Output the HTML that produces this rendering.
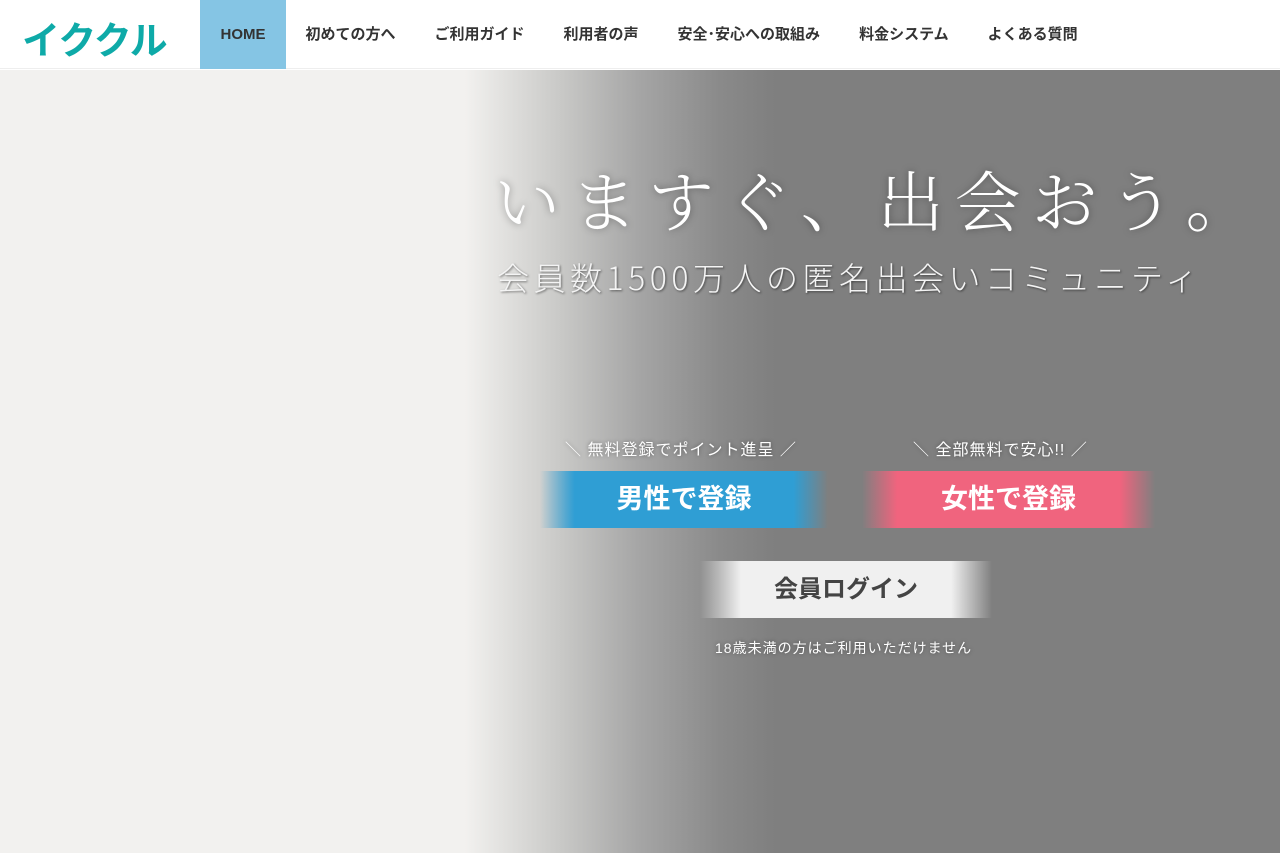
<!DOCTYPE html>
<html><head><meta charset="utf-8"><style>
*{margin:0;padding:0;box-sizing:border-box}
body{width:1280px;height:853px;overflow:hidden;font-family:"Liberation Sans","Noto Sans CJK JP",sans-serif;background:#fff}
.hdr{height:69px;background:#fff;position:relative;border-bottom:1px solid #eee}
.logo{position:absolute;left:22px;top:10px;font-size:38px;font-weight:bold;color:#0eaaa8;letter-spacing:-1px}
.nav{position:absolute;left:200px;top:0;display:flex;height:69px}
.nav a{display:block;height:69px;line-height:69px;padding:0 19.5px;font-size:15px;font-weight:bold;color:#333;text-decoration:none}
.nav a.on{background:#85c5e4;width:86px;text-align:center;padding:0}
.hero{position:absolute;top:70px;left:0;width:1280px;height:783px;background:linear-gradient(to right,#f2f1ef 0,#f2f1ef 465px,#c9c9c7 560px,#a5a5a5 640px,#8a8a8a 720px,#7f7f7f 775px,#7f7f7f 100%)}
.t1{position:absolute;left:494px;top:80px;font-family:"Noto Serif CJK SC","Noto Serif CJK JP",serif;font-size:66px;color:#fff;letter-spacing:11px;text-shadow:0 0 8px rgba(0,0,0,.35);white-space:nowrap;font-weight:300}
.t2{position:absolute;left:497px;top:184px;font-family:"Noto Sans CJK JP",sans-serif;font-size:32px;color:#f4f4f4;letter-spacing:4.5px;text-shadow:1px 1px 2px rgba(0,0,0,.5);white-space:nowrap;font-weight:300}
.cap{position:absolute;font-size:16px;color:#fff;text-shadow:0 0 4px rgba(0,0,0,.4);white-space:nowrap;letter-spacing:1px}
.btn{position:absolute;height:57px;line-height:57px;text-align:center;font-size:27px;font-weight:bold;color:#fff}
.b1{left:540px;top:401px;width:288px;background:linear-gradient(to right,rgba(47,158,212,0),#2f9ed4 12%,#2f9ed4 88%,rgba(47,158,212,0))}
.b2{left:862px;top:401px;width:293px;background:linear-gradient(to right,rgba(240,100,126,0),#f0647e 12%,#f0647e 88%,rgba(240,100,126,0))}
.b3{left:700px;top:491px;width:292px;background:linear-gradient(to right,rgba(240,240,240,0),#f0f0f0 14%,#f0f0f0 86%,rgba(240,240,240,0));color:#444;font-size:24px}
</style></head><body>
<div class="hdr"><div class="logo">イククル</div>
<div class="nav"><a class="on">HOME</a><a>初めての方へ</a><a>ご利用ガイド</a><a>利用者の声</a><a>安全･安心への取組み</a><a>料金システム</a><a>よくある質問</a></div></div>
<div class="hero">
<div class="t1">いますぐ、出会おう。</div>
<div class="t2">会員数1500万人の匿名出会いコミュニティ</div>
<div class="cap" style="left:565px;top:366px">＼ 無料登録でポイント進呈 ／</div>
<div class="cap" style="left:913px;top:366px">＼ 全部無料で安心!! ／</div>
<div class="btn b1">男性で登録</div>
<div class="btn b2">女性で登録</div>
<div class="btn b3">会員ログイン</div>
<div class="cap" style="left:715px;top:568px;font-size:14px;letter-spacing:1px">18歳未満の方はご利用いただけません</div>
</div>
</body></html>
